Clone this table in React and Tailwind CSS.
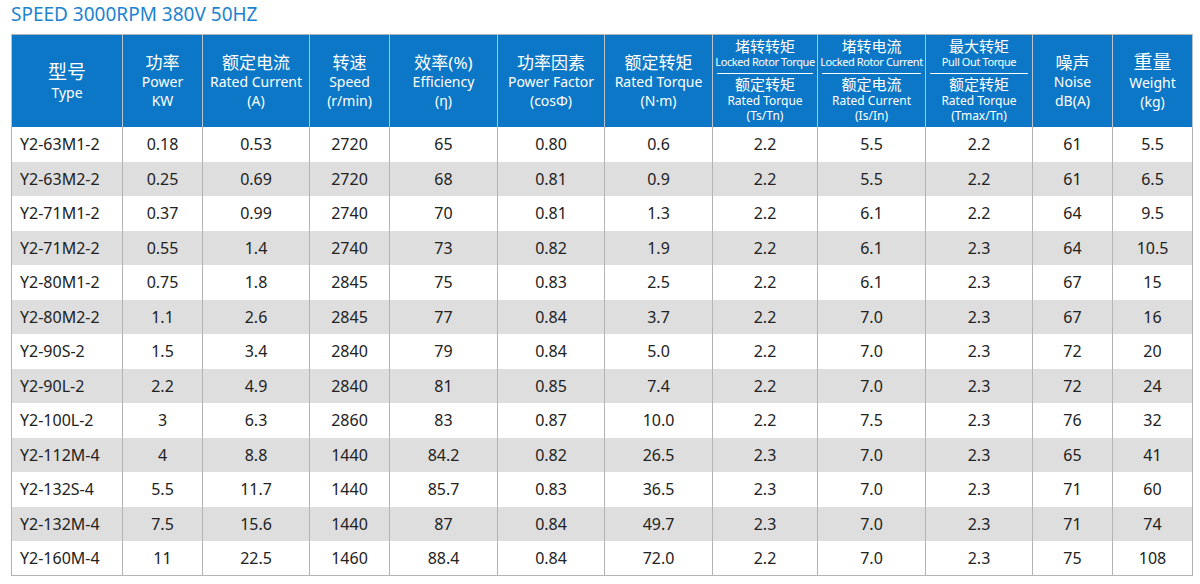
const rows = [
  ["Y2-63M1-2", "0.18", "0.53", "2720", "65", "0.80", "0.6", "2.2", "5.5", "2.2", "61", "5.5"],
  ["Y2-63M2-2", "0.25", "0.69", "2720", "68", "0.81", "0.9", "2.2", "5.5", "2.2", "61", "6.5"],
  ["Y2-71M1-2", "0.37", "0.99", "2740", "70", "0.81", "1.3", "2.2", "6.1", "2.2", "64", "9.5"],
  ["Y2-71M2-2", "0.55", "1.4", "2740", "73", "0.82", "1.9", "2.2", "6.1", "2.3", "64", "10.5"],
  ["Y2-80M1-2", "0.75", "1.8", "2845", "75", "0.83", "2.5", "2.2", "6.1", "2.3", "67", "15"],
  ["Y2-80M2-2", "1.1", "2.6", "2845", "77", "0.84", "3.7", "2.2", "7.0", "2.3", "67", "16"],
  ["Y2-90S-2", "1.5", "3.4", "2840", "79", "0.84", "5.0", "2.2", "7.0", "2.3", "72", "20"],
  ["Y2-90L-2", "2.2", "4.9", "2840", "81", "0.85", "7.4", "2.2", "7.0", "2.3", "72", "24"],
  ["Y2-100L-2", "3", "6.3", "2860", "83", "0.87", "10.0", "2.2", "7.5", "2.3", "76", "32"],
  ["Y2-112M-4", "4", "8.8", "1440", "84.2", "0.82", "26.5", "2.3", "7.0", "2.3", "65", "41"],
  ["Y2-132S-4", "5.5", "11.7", "1440", "85.7", "0.83", "36.5", "2.3", "7.0", "2.3", "71", "60"],
  ["Y2-132M-4", "7.5", "15.6", "1440", "87", "0.84", "49.7", "2.3", "7.0", "2.3", "71", "74"],
  ["Y2-160M-4", "11", "22.5", "1460", "88.4", "0.84", "72.0", "2.2", "7.0", "2.3", "75", "108"],
];

const widths = ["w-[111px]", "w-[80px]", "w-[107px]", "w-[80px]", "w-[108px]", "w-[107px]", "w-[108px]", "w-[105px]", "w-[108px]", "w-[107px]", "w-[80px]", "w-[80px]"];

function Simple({ cn, lines, big }) {
  return (
    <th className="border-x border-[#b9c3cc] align-middle font-normal px-1">
      <div className="flex flex-col items-center leading-[19px]">
        <span className={big ? "text-[19px] leading-[22px]" : "text-[17px]"}>{cn}</span>
        {lines.map((l) => (
          <span key={l} className="text-[14px]">{l}</span>
        ))}
      </div>
    </th>
  );
}

function Split({ topCn, topEn, botCn, botEn, ratio }) {
  return (
    <th className="border-x border-[#b9c3cc] align-top font-normal p-0">
      <div className="flex flex-col h-[92px]">
        <div className="h-[39px] flex flex-col items-center justify-center leading-[16px] mx-[4px] border-b border-white">
          <span className="text-[15px]">{topCn}</span>
          <span className="text-[11px] tracking-[-0.4px] whitespace-nowrap">{topEn}</span>
        </div>
        <div className="flex-1 flex flex-col items-center justify-center leading-[15px] pb-[2px]">
          <span className="text-[15px] leading-[17px]">{botCn}</span>
          <span className="text-[12px]">{botEn}</span>
          <span className="text-[12px]">{ratio}</span>
        </div>
      </div>
    </th>
  );
}

export default function App() {
  return (
    <div className="w-[1200px] h-[584px] bg-white pl-[11px] pt-[3px] font-['Noto_Sans','Noto_Sans_CJK_SC',sans-serif]">
      <h1 className="text-[19px] leading-[23px] text-[#1d83cf] mb-[8px]">SPEED 3000RPM 380V 50HZ</h1>

      <table className="table-fixed w-[1181px] border-collapse border border-[#b4b4b4] text-center">
        <colgroup>
          {widths.map((w, i) => (
            <col key={i} className={w} />
          ))}
        </colgroup>
        <thead>
          <tr className="h-[92px] bg-[#0b77c6] text-white">
            <Simple cn="型号" lines={["Type"]} big />
            <Simple cn="功率" lines={["Power", "KW"]} />
            <Simple cn="额定电流" lines={["Rated Current", "(A)"]} />
            <Simple cn="转速" lines={["Speed", "(r/min)"]} />
            <Simple cn="效率(%)" lines={["Efficiency", "(η)"]} />
            <Simple cn="功率因素" lines={["Power Factor", "(cosΦ)"]} />
            <Simple cn="额定转矩" lines={["Rated Torque", "(N·m)"]} />
            <Split topCn="堵转转矩" topEn="Locked Rotor Torque" botCn="额定转矩" botEn="Rated Torque" ratio="(Ts/Tn)" />
            <Split topCn="堵转电流" topEn="Locked Rotor Current" botCn="额定电流" botEn="Rated Current" ratio="(Is/In)" />
            <Split topCn="最大转矩" topEn="Pull Out Torque" botCn="额定转矩" botEn="Rated Torque" ratio="(Tmax/Tn)" />
            <Simple cn="噪声" lines={["Noise", "dB(A)"]} />
            <Simple cn="重量" lines={["Weight", "(kg)"]} big />
          </tr>
        </thead>
        <tbody className="text-[16px] text-[#222]">
          {rows.map((r, i) => (
            <tr key={r[0]} className={i % 2 === 1 ? "h-[34.5px] bg-[#dedede]" : "h-[34.5px] bg-white"}>
              {r.map((v, j) => (
                <td
                  key={j}
                  className={j === 0 ? "border-x border-[#b4b4b4] text-left pl-[8px]" : "border-x border-[#b4b4b4]"}
                >
                  {v}
                </td>
              ))}
            </tr>
          ))}
        </tbody>
      </table>
    </div>
  );
}
